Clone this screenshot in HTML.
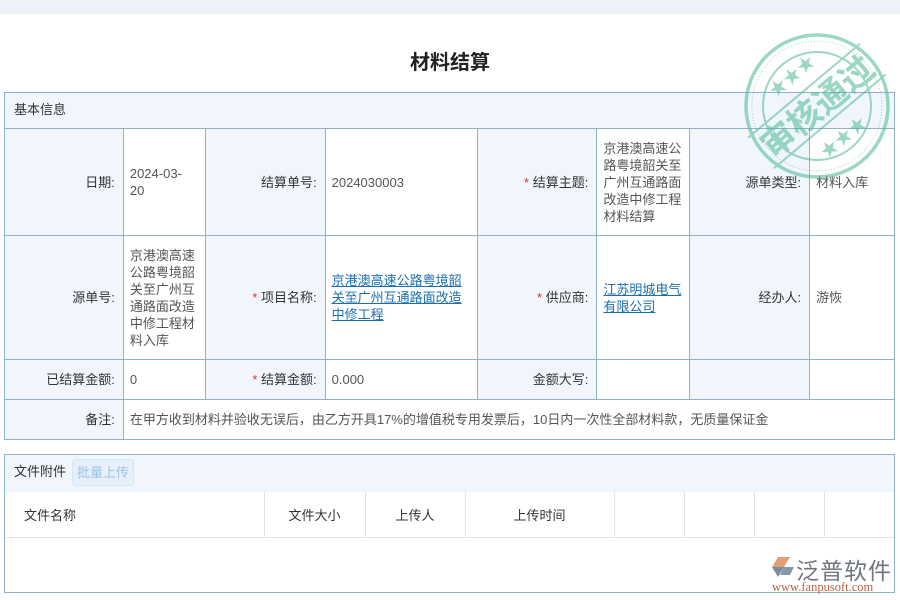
<!DOCTYPE html>
<html><head><meta charset="utf-8"><style>
*{margin:0;padding:0;box-sizing:border-box}
body{width:900px;height:600px;background:#fff;font-family:"Liberation Sans","Noto Sans CJK SC",sans-serif;font-size:13px;color:#333;position:relative;overflow:hidden}
.top{position:absolute;left:0;top:0;width:900px;height:14px;background:#eef2f8}
h1{position:absolute;left:0;width:900px;top:46px;text-align:center;font-size:20px;font-weight:bold;color:#222}
table{border-collapse:collapse;position:absolute}
#t td{border:1px solid #8fb3c8;vertical-align:middle;line-height:17px;color:#555}
#t td.l{background:#f0f6fc;text-align:right;padding-right:8px;color:#333}
#t td.v{padding:0 6px}
.s{color:#e0302c}
a{color:#1a6fb0;text-decoration:underline}
.hd{position:absolute;left:4px;top:92px;width:891px;height:37px;background:#f0f6fc;border:1px solid #8fb3c8;border-bottom:none;padding:0 9px;line-height:33px;color:#333}
.fb{position:absolute;left:4px;top:454px;width:891px;height:139px;border:1px solid #8fb3c8}
.fh{height:37px;background:#f0f6fc;padding:0 9px;line-height:34px;position:relative}
.btn{position:absolute;left:67px;top:4px;width:62px;height:27px;background:#e6f0fa;border:1px solid #d4e5f4;border-radius:3px;color:#9ec3e3;text-align:center;line-height:25px}
#f{left:0;top:37px}
#f td{border:1px solid #e3e3e3;border-top:none;height:45px;color:#333}
</style></head><body>
<div class="top"></div>
<h1>材料结算</h1>
<div class="hd">基本信息</div>
<table id="t" style="left:4px;top:128px;width:891px">
<colgroup><col style="width:119px"><col style="width:82px"><col style="width:120px"><col style="width:152px"><col style="width:120px"><col style="width:93px"><col style="width:120px"><col style="width:85px"></colgroup>
<tr style="height:107px"><td class="l">日期:</td><td class="v">2024-03-<br>20</td><td class="l">结算单号:</td><td class="v">2024030003</td><td class="l"><span class="s">*</span> 结算主题:</td><td class="v">京港澳高速公路粤境韶关至广州互通路面改造中修工程材料结算</td><td class="l">源单类型:</td><td class="v">材料入库</td></tr>
<tr style="height:124px"><td class="l">源单号:</td><td class="v">京港澳高速公路粤境韶关至广州互通路面改造中修工程材料入库</td><td class="l"><span class="s">*</span> 项目名称:</td><td class="v"><a>京港澳高速公路粤境韶关至广州互通路面改造中修工程</a></td><td class="l"><span class="s">*</span> 供应商:</td><td class="v"><a>江苏明城电气有限公司</a></td><td class="l">经办人:</td><td class="v">游恢</td></tr>
<tr style="height:40px"><td class="l">已结算金额:</td><td class="v">0</td><td class="l"><span class="s">*</span> 结算金额:</td><td class="v">0.000</td><td class="l">金额大写:</td><td class="v"></td><td class="l"></td><td class="v"></td></tr>
<tr style="height:40px"><td class="l">备注:</td><td class="v" colspan="7">在甲方收到材料并验收无误后，由乙方开具17%的增值税专用发票后，10日内一次性全部材料款，无质量保证金</td></tr>
</table>
<div class="fb"><div class="fh">文件附件<div class="btn">批量上传</div></div>
<table id="f" style="width:889px">
<colgroup><col style="width:259px"><col style="width:101px"><col style="width:100px"><col style="width:149px"><col style="width:70px"><col style="width:70px"><col style="width:70px"><col style="width:70px"></colgroup>
<tr><td style="padding-left:19px;border-left:none">文件名称</td><td style="text-align:center">文件大小</td><td style="text-align:center">上传人</td><td style="text-align:center">上传时间</td><td></td><td></td><td></td><td style="border-right:none"></td></tr>
</table></div>
<svg style="position:absolute;left:740px;top:33px" width="160" height="155" viewBox="0 0 160 155">
<g opacity="0.55" fill="none" stroke="#4cb896">
<circle cx="77" cy="73" r="71" stroke-width="3.5"/>
<circle cx="77" cy="73" r="65" stroke-width="1" stroke-dasharray="1 2"/>
<circle cx="77" cy="73" r="54" stroke-width="2"/>
<g transform="rotate(-40 77 73)">
<line x1="4" y1="53" x2="150" y2="53" stroke-width="2"/>
<line x1="4" y1="93" x2="150" y2="93" stroke-width="2"/>
<text x="77" y="86" text-anchor="middle" font-family="Noto Sans CJK SC,sans-serif" font-size="34" font-weight="bold" fill="#4cb896" stroke="none">审核通过</text>
<text x="77" y="40" text-anchor="middle" font-size="18" fill="#4cb896" stroke="none">★★★</text>
<text x="77" y="120" text-anchor="middle" font-size="18" fill="#4cb896" stroke="none">★★★</text>
</g></g></svg>
<svg style="position:absolute;left:770px;top:555px" width="26" height="24" viewBox="0 0 26 24"><path d="M8 2 L20 2 L14 12 L2 12 Z" fill="#e2a07a"/><path d="M2 12 L14 12 L8 22 Z" fill="#7a8aa0"/><path d="M14 12 L24 12 L20 20 L10 20 Z" fill="#8896aa"/></svg>
<div style="position:absolute;left:796px;top:552px;font-size:23px;color:#707580;letter-spacing:1px">泛普软件</div>
<div style="position:absolute;left:772px;top:580px;font-family:'Liberation Serif',serif;font-size:12.5px;color:#b5644a">www.fanpusoft.com</div>
</body></html>
